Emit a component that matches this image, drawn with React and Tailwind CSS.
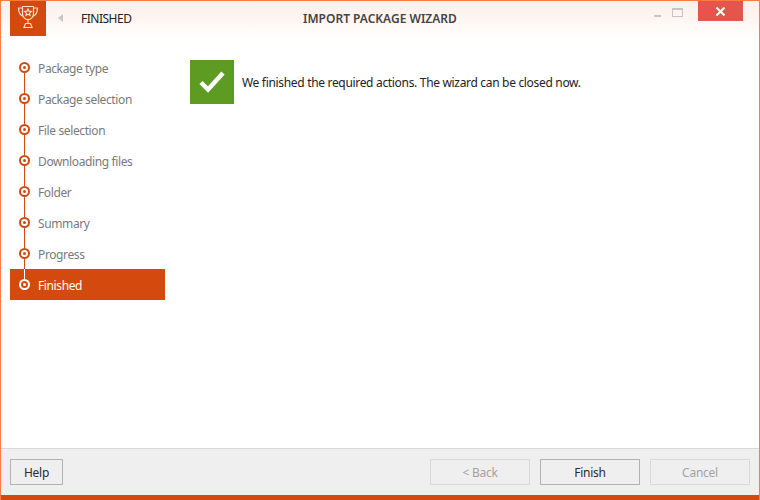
const steps = [
  "Package type",
  "Package selection",
  "File selection",
  "Downloading files",
  "Folder",
  "Summary",
  "Progress",
  "Finished",
];

const TrophyIcon = () => (
  <svg width="22" height="24" viewBox="0 0 22 24" fill="none" stroke="#fbdccd" strokeWidth="1.200">
    <path d="M5.500 1.500h11v7c0 3.500-2.500 6-5.500 6s-5.500-2.500-5.500-6z" />
    <path d="M5.500 3H1.500c0 4 1 7 5 8.500M16.500 3h4c0 4-1 7-5 8.500" />
    <path d="M11 4l1 2.200 2.300.3-1.700 1.600.4 2.300-2-1.100-2 1.100.4-2.300-1.700-1.600 2.300-.3z" />
    <path d="M11 14.500v4M8.500 18.500h5l1.500 4H7z" />
  </svg>
);

const Step = ({ label, index, active }) => (
  <div className={`relative flex items-center h-[31px] pl-[28px] pt-[2px] text-[12px] tracking-[-0.38px] ${active ? "bg-[#d4490d] text-white" : "text-[#7a7a7a]"}`}>
    {index > 0 && (
      <div className={`absolute left-[14px] top-0 h-[10px] w-[1px] ${active ? "bg-white" : "bg-[#d4490d]"}`} />
    )}
    {index < steps.length - 1 && (
      <div className="absolute left-[14px] top-[21px] h-[10px] w-[1px] bg-[#d4490d]" />
    )}
    <div className={`absolute left-[9px] top-[10px] w-[11px] h-[11px] rounded-full border-2 flex items-center justify-center ${active ? "border-white" : "border-[#d4490d] bg-white"}`}>
      <div className={`w-[3px] h-[3px] rounded-full ${active ? "bg-white" : "bg-[#d4490d]"}`} />
    </div>
    {label}
  </div>
);

const FooterButton = ({ children, disabled, width }) => (
  <button
    className={`h-[26px] pt-[1px] text-[12px] tracking-[-0.25px] border ${width} bg-[#efefef] ${
      disabled ? "border-[#d9d9d9] text-[#a3a3a3]" : "border-[#b3b3b3] text-[#2b2b2b]"
    }`}
  >
    {children}
  </button>
);

export default function App() {
  return (
    <div className="w-[760px] h-[500px] flex flex-col bg-white border-x border-t border-[#ff7b45] font-['Noto_Sans','Open_Sans',sans-serif] overflow-hidden">
      {/* Title bar */}
      <div className="flex h-[38px] shrink-0 bg-gradient-to-b from-[#fdeee8] to-white relative">
        <div className="ml-[9px] w-[36px] h-[35px] bg-[#d4490d] flex items-center justify-center pb-[4px]">
          <TrophyIcon />
        </div>
        <div className="ml-[12px] mt-[13px] w-0 h-0 border-y-[4px] border-y-transparent border-r-[5px] border-r-[#c8c8c8]" />
        <div className="ml-[18px] mt-[10px] text-[12px] tracking-[-0.5px] leading-[16px] text-[#222]">FINISHED</div>
        <div className="absolute left-[302px] top-[10px] text-[12px] leading-[16px] font-semibold text-[#444]">
          IMPORT PACKAGE WIZARD
        </div>
        <div className="ml-auto flex items-start">
          <div className="mt-[14px] w-[7px] h-[2px] bg-[#c4c4c4]" />
          <div className="ml-[11px] mt-[7px] w-[11px] h-[9px] border border-[#c4c4c4] border-t-2" />
          <div className="ml-[15px] mr-[16px] w-[45px] h-[20px] bg-[#e5554c] flex items-center justify-center">
            <svg width="9" height="9" viewBox="0 0 9 9" stroke="white" strokeWidth="2">
              <path d="M0.500 0.500l8 8M8.500 0.500l-8 8" />
            </svg>
          </div>
        </div>
      </div>

      {/* Body */}
      <div className="flex flex-1 min-h-0">
        <div className="w-[155px] ml-[9px] mt-[13px] shrink-0">
          {steps.map((s, i) => (
            <Step key={s} label={s} index={i} active={i === steps.length - 1} />
          ))}
        </div>
        <div className="ml-[25px] mt-[21px] flex items-start">
          <div className="w-[44px] h-[44px] bg-[#5e9b22] flex items-center justify-center">
            <svg width="26" height="22" viewBox="0 0 26 22" fill="none" stroke="white" strokeWidth="4.500">
              <path d="M2 11.500l7 7L24 2" />
            </svg>
          </div>
          <div className="ml-[8px] mt-[14px] text-[12px] tracking-[-0.32px] leading-[18px] text-[#222]">
            We finished the required actions. The wizard can be closed now.
          </div>
        </div>
      </div>

      {/* Footer */}
      <div className="h-[47px] shrink-0 bg-[#efefef] border-t border-[#d9d9d9] flex items-start pt-[10px] pl-[9px] pr-[9px] gap-[10px]">
        <FooterButton width="w-[53px] mr-auto">Help</FooterButton>
        <FooterButton width="w-[100px]" disabled>&lt; Back</FooterButton>
        <FooterButton width="w-[100px]">Finish</FooterButton>
        <FooterButton width="w-[100px]" disabled>Cancel</FooterButton>
      </div>
      <div className="h-[5px] shrink-0 bg-[#d4490d] -mx-[1px]" />
    </div>
  );
}
